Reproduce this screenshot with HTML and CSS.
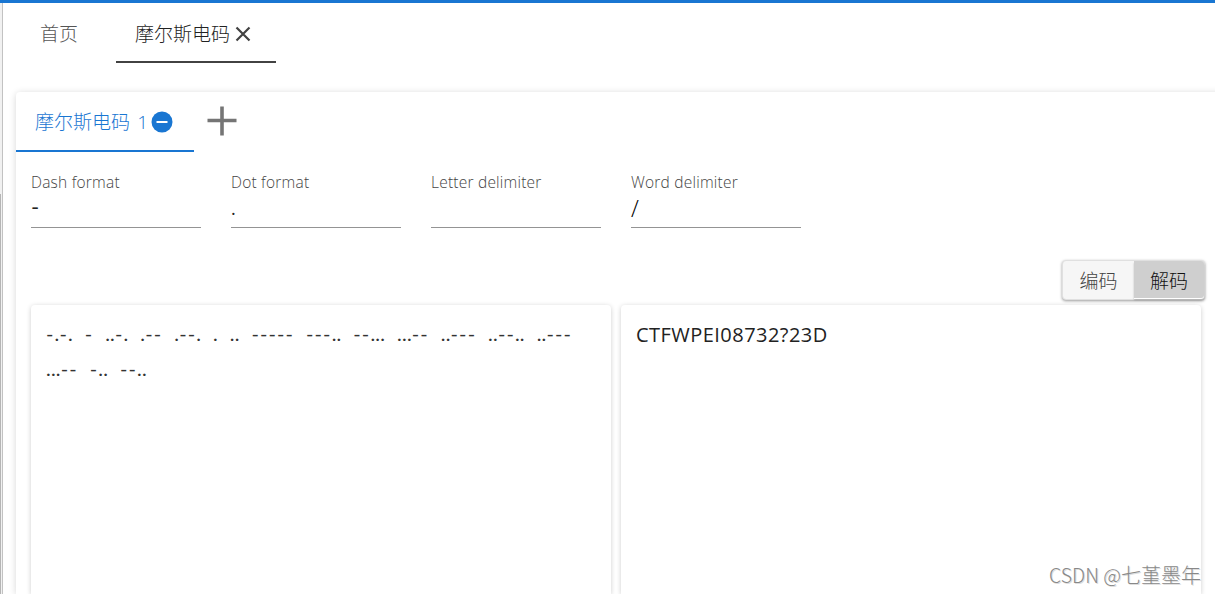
FILE: index.html
```html
<!DOCTYPE html>
<html lang="zh-CN">
<head>
<meta charset="utf-8">
<title>摩尔斯电码</title>
<link rel="stylesheet" href="styles.css">
</head>
<body>
<div class="topbar"></div>
<div class="shell">
  <aside class="rail"><div class="rail-thumb"></div></aside>
  <main class="main">
    <nav class="tabs">
      <a class="tab tab-home">首页</a>
      <a class="tab tab-current"><span>摩尔斯电码</span>
        <svg class="close" viewBox="0 0 16 16"><path d="M1.5 1.5 14.5 14.5M14.5 1.5 1.5 14.5"/></svg>
      </a>
    </nav>
    <section class="card">
      <div class="subtabs">
        <a class="subtab"><span>摩尔斯电码 <span class="digit">1</span></span>
          <svg class="minus" viewBox="0 0 22 22"><circle cx="11" cy="11" r="10.5"/><path d="M5.5 11H16.5"/></svg>
        </a>
        <svg class="plus" viewBox="0 0 30 30"><path d="M0.5 14.5H29.5M15 0.5V29.5"/></svg>
      </div>
      <div class="fields">
        <label class="field"><span class="label">Dash format</span><span class="value value-dash">-</span></label>
        <label class="field"><span class="label">Dot format</span><span class="value value-dot">.</span></label>
        <label class="field"><span class="label">Letter delimiter</span><span class="value"></span></label>
        <label class="field"><span class="label">Word delimiter</span><span class="value value-slash">/</span></label>
      </div>
      <div class="modes">
        <div class="toggle"><button class="mode">编码</button><button class="mode mode-on">解码</button></div>
      </div>
      <div class="panels">
        <div class="panel morse"><b>-</b>.<b>-</b>. <b>-</b> ..<b>-</b>. .<b>--</b> .<b>--</b>. . .. <b>-----</b> <b>---</b>.. <b>--</b>... ...<b>--</b> ..<b>---</b> ..<b>--</b>.. ..<b>---</b><br>...<b>--</b> <b>-</b>.. <b>--</b>..</div>
        <div class="panel plain">CTFWPEI08732?23D</div>
      </div>
    </section>
  </main>
</div>
<div class="watermark"><span class="brand">CSDN @</span>七堇墨年</div>
</body>
</html>
```
FILE: styles.css
```css
* { box-sizing: border-box; }
body {
  margin: 0;
  height: 594px;
  overflow: hidden;
  background: #fff;
  color: #222;
  font-family: "Open Sans", "Noto Sans CJK SC", sans-serif;
}
.topbar { height: 3px; background: #1976d2; }
.shell { display: flex; height: 591px; overflow: hidden; }
.rail { width: 3px; background: #f1f1f1; border-right: 1px solid #c2c2c2; padding-top: 191px; }
.rail-thumb { width: 1px; height: 400px; background: #b5b5b5; }
.main { flex: none; width: 1212px; padding-left: 13px; }
.tabs { display: flex; height: 60px; font: 300 19px/60px "Noto Sans CJK SC", sans-serif; }
.tab-home { width: 100px; padding-left: 24px; color: #555; }
.tab-current {
  display: flex;
  align-items: center;
  width: 160px;
  padding: 1px 0 0 19px;
  color: #222;
  border-bottom: 2px solid #424242;
}
.close { width: 16px; height: 16px; margin: 2px 0 0 5px; fill: none; stroke: #424242; stroke-width: 2.2; }
.card {
  margin-top: 29px;
  width: 1230px;
  height: 502px;
  border-radius: 4px 0 0 0;
  box-shadow: 0 1px 7px rgba(0, 0, 0, .16);
}
.subtabs { display: flex; height: 60px; }
.subtab {
  display: flex;
  align-items: center;
  width: 178px;
  padding: 1px 0 0 19px;
  color: #1976d2;
  font: 300 19px/58px "Noto Sans CJK SC", sans-serif;
  border-bottom: 2px solid #1976d2;
}
.digit { margin-left: 3px; font-family: "Open Sans", sans-serif; }
.minus { width: 22px; height: 22px; margin: 1px 0 0 3px; fill: #1976d2; stroke: #fff; stroke-width: 2; }
.minus circle { stroke: none; }
.plus { width: 30px; height: 30px; margin: 14px 0 0 13px; fill: none; stroke: #757575; stroke-width: 3.6; }
.fields { display: flex; gap: 30px; height: 84px; padding: 20px 0 0 15px; }
.field { display: flex; flex-direction: column; width: 170px; height: 56px; border-bottom: 1px solid #949494; }
.label { height: 20px; font-size: 15.5px; font-weight: 300; line-height: 21px; letter-spacing: .22px; color: #444; white-space: nowrap; }
.value { height: 30px; font: 20px/32px "Open Sans", sans-serif; }
.value-dash { font: 22px/30px Lato, sans-serif; }
.value-dot { font-size: 18px; }
.value-slash { font-size: 23px; font-weight: 300; color: #000; }
.modes { display: flex; justify-content: flex-end; height: 69px; padding: 24px 41px 0 0; }
.toggle {
  display: flex;
  width: 143px;
  height: 40px;
  border: 1px solid #e0e0e0;
  border-radius: 4px;
  background: #f6f6f6;
  box-shadow: 0 1px 3px rgba(0, 0, 0, .4);
}
.mode { width: 71px; padding: 0; border: 0; background: none; color: #444; font: 300 19px/38px "Noto Sans CJK SC", sans-serif; }
.mode-on { width: 70px; height: 37px; background: #cfcfcf; color: #111; border-radius: 0 3px 3px 0; box-shadow: 0 1px 0 #fff, 0 2px 2px rgba(0, 0, 0, .25); }
.panels { display: flex; gap: 10px; padding-left: 15px; }
.panel {
  width: 580px;
  height: 289px;
  padding: 12px 15px;
  border-radius: 4px 4px 0 0;
  box-shadow: 0 1px 5px rgba(0, 0, 0, .2);
  font-size: 20px;
  line-height: 36px;
  white-space: nowrap;
}
.plain { letter-spacing: .46px; }
.morse { padding-top: 11px; font-family: Lato, sans-serif; line-height: 35px; letter-spacing: .2px; word-spacing: 6.55px; color: #333; }
.morse b { font-weight: 400; letter-spacing: 1.1px; }
.watermark {
  position: absolute;
  right: 14px;
  bottom: 4px;
  color: #888;
  font: 300 20px/30px "Noto Sans CJK SC", sans-serif;
  text-shadow: 1px 1px 0 #ddd;
}
.brand { font-size: 19.5px; }
```
